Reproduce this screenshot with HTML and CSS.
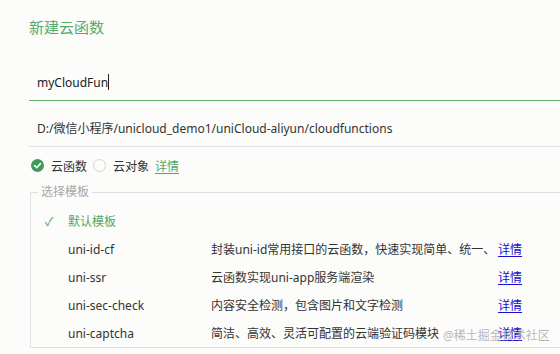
FILE: index.html
```html
<!DOCTYPE html>
<html lang="zh-CN">
<head>
    <meta charset="UTF-8">
    <title>新建云函数</title>
    <link rel="stylesheet" href="styles.css">
</head>
<body>

<div class="dialog">
    <div class="title">新建云函数</div>

    <div class="field name-field">
        <span>myCloudFun</span><span class="caret"></span>
    </div>

    <div class="field path-field">D:/微信小程序/unicloud_demo1/uniCloud-aliyun/cloudfunctions</div>

    <div class="type-row">
        <span class="radio checked">
            <svg width="13" height="13" viewBox="0 0 13 13">
                <circle cx="6.5" cy="6.5" r="6.5" fill="#3f9b5a"/>
                <path d="M3.6 6.7 L5.7 8.7 L9.4 4.6" fill="none" stroke="#fff" stroke-width="1.7" stroke-linecap="round" stroke-linejoin="round"/>
            </svg>
        </span>
        <span class="radio-label">云函数</span>
        <span class="radio"></span>
        <span class="radio-label">云对象</span>
        <a class="more green" href="#">详情</a>
    </div>

    <fieldset class="templates">
        <legend>选择模板</legend>
        <div class="tpl-row selected">
            <span class="tick">✓</span>
            <span class="tpl-name">默认模板</span>
        </div>
        <div class="tpl-row">
            <span class="tpl-name">uni-id-cf</span>
            <span class="tpl-desc">封装uni-id常用接口的云函数，快速实现简单、统一、可扩展的用户中心</span>
            <a class="more" href="#">详情</a>
        </div>
        <div class="tpl-row">
            <span class="tpl-name">uni-ssr</span>
            <span class="tpl-desc">云函数实现uni-app服务端渲染</span>
            <a class="more" href="#">详情</a>
        </div>
        <div class="tpl-row">
            <span class="tpl-name">uni-sec-check</span>
            <span class="tpl-desc">内容安全检测，包含图片和文字检测</span>
            <a class="more" href="#">详情</a>
        </div>
        <div class="tpl-row">
            <span class="tpl-name">uni-captcha</span>
            <span class="tpl-desc">简洁、高效、灵活可配置的云端验证码模块</span>
            <a class="more" href="#">详情</a>
        </div>
    </fieldset>
</div>

<div class="watermark">@稀土掘金技术社区</div>

</body>
</html>
```

FILE: styles.css
```css
body {
    margin: 0;
    background: #fcfcfa;
    font-family: "Noto Sans", "Noto Sans CJK SC", sans-serif;
    font-size: 12px;
    color: #333;
    overflow: hidden;
    height: 354px;
    position: relative;
}

.dialog {
    padding-left: 29px;
    display: flex;
    flex-direction: column;
}

.title {
    height: 54px;
    line-height: 54px;
    font-size: 15px;
    color: #5aa86c;
}

.field {
    display: flex;
    align-items: center;
    padding-left: 8px;
    white-space: nowrap;
}

.name-field {
    height: 36px;
    padding-top: 10px;
    color: #222;
    border-bottom: 1.5px solid #5fb070;
}

.caret {
    display: inline-block;
    width: 1px;
    height: 16px;
    background: #222;
}

.path-field {
    height: 36px;
    padding-top: 9px;
    border-bottom: 1px solid #e3e3e3;
}

.type-row {
    height: 37px;
    display: flex;
    align-items: center;
    padding-left: 2px;
}

.radio {
    width: 11px;
    height: 11px;
    border: 1px solid #d4d4d4;
    border-radius: 50%;
    margin-right: 7px;
    display: flex;
}

.radio.checked {
    border: none;
    width: 13px;
    height: 13px;
}

.radio-label {
    margin-right: 6px;
}

a.more {
    color: #1a0dcc;
    text-decoration: underline;
    text-underline-offset: 2px;
}

a.more.green {
    color: #4fa866;
}

.templates {
    margin: 0 0 0 1px;
    padding: 7px 0 0 0;
    border: 1px solid #e0e0e0;
    border-right: none;
    min-width: 0;
}

.templates legend {
    margin-left: 7px;
    padding: 0 3px;
    color: #a8a8a8;
    line-height: 16px;
}

.tpl-row {
    height: 28px;
    display: flex;
    align-items: center;
    padding-left: 37px;
    white-space: nowrap;
}

.tpl-row.selected {
    color: #4fa866;
    padding-left: 14px;
}

.tick {
    width: 23px;
}

.tpl-name {
    width: 143px;
}

.tpl-desc {
    width: 282px;
    margin-right: 5px;
    overflow: hidden;
}

.watermark {
    position: absolute;
    left: 443px;
    top: 327px;
    color: rgba(170, 170, 170, 0.85);
    font-size: 12px;
    line-height: 18px;
}
```
